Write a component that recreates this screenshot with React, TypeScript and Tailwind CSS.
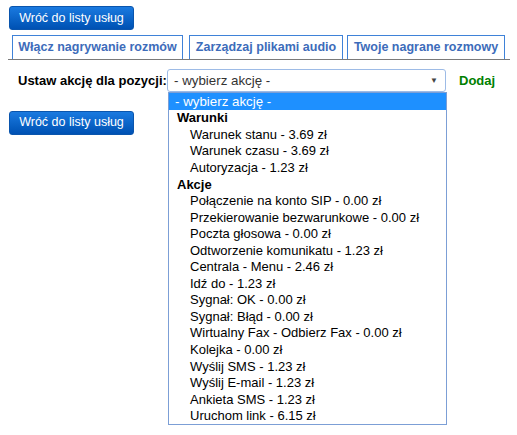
const options: { label: string; kind: 'selected' | 'group' | 'item' }[] = [
  { label: '- wybierz akcję -', kind: 'selected' },
  { label: 'Warunki', kind: 'group' },
  { label: 'Warunek stanu - 3.69 zł', kind: 'item' },
  { label: 'Warunek czasu - 3.69 zł', kind: 'item' },
  { label: 'Autoryzacja - 1.23 zł', kind: 'item' },
  { label: 'Akcje', kind: 'group' },
  { label: 'Połączenie na konto SIP - 0.00 zł', kind: 'item' },
  { label: 'Przekierowanie bezwarunkowe - 0.00 zł', kind: 'item' },
  { label: 'Poczta głosowa - 0.00 zł', kind: 'item' },
  { label: 'Odtworzenie komunikatu - 1.23 zł', kind: 'item' },
  { label: 'Centrala - Menu - 2.46 zł', kind: 'item' },
  { label: 'Idź do - 1.23 zł', kind: 'item' },
  { label: 'Sygnał: OK - 0.00 zł', kind: 'item' },
  { label: 'Sygnał: Błąd - 0.00 zł', kind: 'item' },
  { label: 'Wirtualny Fax - Odbierz Fax - 0.00 zł', kind: 'item' },
  { label: 'Kolejka - 0.00 zł', kind: 'item' },
  { label: 'Wyślij SMS - 1.23 zł', kind: 'item' },
  { label: 'Wyślij E-mail - 1.23 zł', kind: 'item' },
  { label: 'Ankieta SMS - 1.23 zł', kind: 'item' },
  { label: 'Uruchom link - 6.15 zł', kind: 'item' },
];

const BackButton = () => (
  <button className="ml-px h-6 w-[125px] rounded-[3px] border border-[#0a55ad] bg-gradient-to-b from-[#1a7ae0] to-[#0051b3] text-[12.5px] leading-none text-white">
    Wróć do listy usług
  </button>
);

const tabs = [
  { label: 'Włącz nagrywanie rozmów', cls: 'ml-1 w-[171px]' },
  { label: 'Zarządzaj plikami audio', cls: 'ml-[6px] w-[154px]' },
  { label: 'Twoje nagrane rozmowy', cls: 'ml-1 w-[158px]' },
];

export default function App() {
  return (
    <div className="relative h-[435px] w-[517px] bg-white pl-2 pt-[5px] font-['Liberation_Sans',Arial,sans-serif] text-black">
      <BackButton />

      <div className="mt-[5px] flex w-[502px] border-b border-[#7a7a7a]">
        {tabs.map((t) => (
          <div
            key={t.label}
            className={`${t.cls} flex h-6 items-center justify-center border border-b-0 border-[#3f82d8] text-[12.5px] font-bold text-[#3d6cba]`}
          >
            {t.label}
          </div>
        ))}
      </div>

      <div className="mt-[9px] flex h-[23px] items-center">
        <span className="ml-[10px] w-[149px] text-[13px] font-bold">Ustaw akcję dla pozycji:</span>
        <div className="relative flex h-[23px] w-[279px] items-center rounded-[3px] border border-[#9dbbe6] pl-[6px] pr-[7px] text-[13.33px] text-[#333]">
          <span className="flex-1">- wybierz akcję -</span>
          <span className="text-[8px] text-[#444]">▼</span>
          <div className="absolute left-0 top-[22px] z-10 w-[279px] border border-[#7c9fd6] bg-white text-[13px] text-black">
            {options.map((o) => (
              <div
                key={o.label}
                className={
                  o.kind === 'selected'
                    ? 'flex h-[16.55px] items-center bg-[#1e90ff] pl-[6px] text-[13.33px] text-white'
                    : o.kind === 'group'
                      ? 'flex h-[16.55px] items-center pl-[8px] font-bold'
                      : 'flex h-[16.55px] items-center pl-[21px]'
                }
              >
                {o.label}
              </div>
            ))}
          </div>
        </div>
        <span className="ml-[13px] text-[13px] font-bold text-[#008000]">Dodaj</span>
      </div>

      <div className="mt-[17px]">
        <BackButton />
      </div>
    </div>
  );
}
